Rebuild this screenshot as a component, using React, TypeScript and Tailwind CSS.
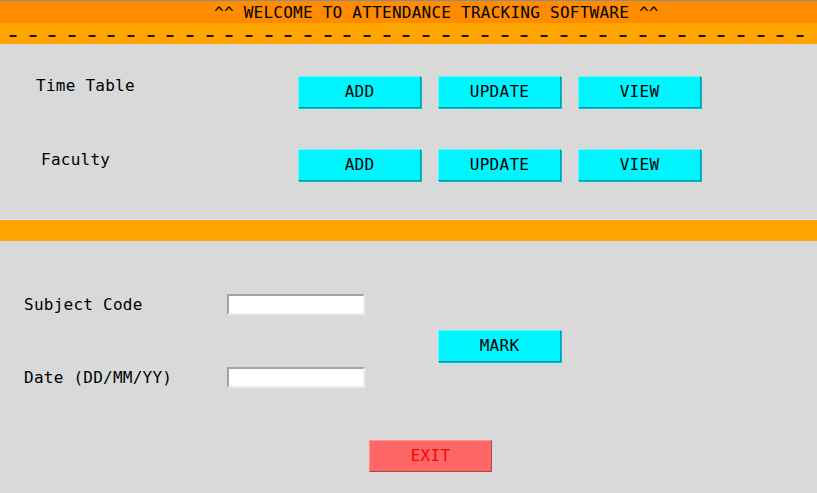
import React from 'react';

const mono = "font-['DejaVu_Sans_Mono','Liberation_Mono',monospace]";

function CyanButton({ label }: { label: string }) {
	return (
		<button className="w-[123px] h-[32px] flex items-center justify-center bg-[#00f5ff] border border-t-[#5ffbff] border-l-[#5ffbff] border-b-[#009aa6] border-r-[#009aa6] shadow-[1px_1px_0_#00c2cc] text-black text-[16px] leading-4">
			{label}
		</button>
	);
}

function Field({ label }: { label: string }) {
	return (
		<div className="flex items-center">
			<span className="w-[227px] pl-[24px] leading-4 text-black">{label}</span>
			<input
				type="text"
				className="w-[138px] h-[21px] bg-white border-2 border-t-[#a3a3a3] border-l-[#a3a3a3] border-b-[#ececec] border-r-[#ececec] outline-none"
			/>
		</div>
	);
}

export default function App() {
	const dashes = Array.from({ length: 41 });

	return (
		<div className={`w-[817px] h-[493px] bg-[#d9d9d9] overflow-hidden text-[16px] tracking-[0.25px] ${mono}`}>
			{/* Header */}
			<div className="border-t border-[#8c8c8c]">
				<div className="h-[22px] bg-[#ff8c00] flex items-center pl-[214px] pt-[1px] leading-4 text-black whitespace-pre">
					^^ WELCOME TO ATTENDANCE TRACKING SOFTWARE ^^
				</div>
				<div className="h-[21px] bg-[#ffa500] flex items-center justify-between pl-[8px] pr-[12px] pt-[2px] leading-4 text-[#1a1000] font-bold">
					{dashes.map((_, i) => (
						<span key={i} className="inline-block scale-x-[0.72]">–</span>
					))}
				</div>
			</div>

			{/* Time table / faculty */}
			<div className="h-[175px] pt-[32px] flex flex-col gap-[41px]">
				<div className="flex items-start">
					<span className="w-[298px] pl-[36px] mt-[2px] leading-4 text-black">Time Table</span>
					<div className="flex gap-[17px]">
						<CyanButton label="ADD" />
						<CyanButton label="UPDATE" />
						<CyanButton label="VIEW" />
					</div>
				</div>
				<div className="flex items-start">
					<span className="w-[298px] pl-[41px] mt-[3px] leading-4 text-black">Faculty</span>
					<div className="flex gap-[17px]">
						<CyanButton label="ADD" />
						<CyanButton label="UPDATE" />
						<CyanButton label="VIEW" />
					</div>
				</div>
			</div>

			{/* Separator */}
			<div className="border-t border-[#e4e4e4] h-[22px] bg-[#ffa500]" />

			{/* Attendance */}
			<div className="pt-[53px] flex flex-col">
				<Field label="Subject Code" />
				<div className="mt-[15px] pl-[438px]">
					<CyanButton label="MARK" />
				</div>
				<div className="mt-[5px]">
					<Field label="Date (DD/MM/YY)" />
				</div>
				<div className="mt-[52px] pl-[369px]">
					<button className="w-[123px] h-[32px] flex items-center justify-center bg-[#ff6666] border border-t-[#ff8f8f] border-l-[#ff8f8f] border-b-[#a34b4b] border-r-[#a34b4b] text-[#ff0000] leading-4">
						EXIT
					</button>
				</div>
			</div>
		</div>
	);
}
